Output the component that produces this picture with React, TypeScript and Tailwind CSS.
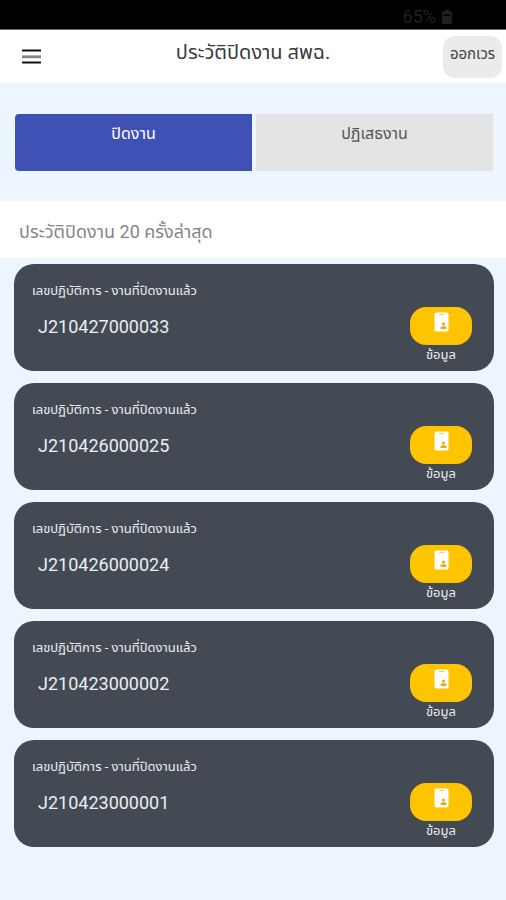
import { useState } from "react";

const jobs = [
  "J210427000033",
  "J210426000025",
  "J210426000024",
  "J210423000002",
  "J210423000001",
];

function StatusBar() {
  return (
    <div className="flex h-[30px] items-center justify-end gap-1.5 border-b border-[#6b6566] bg-black pr-[54px] pt-1 text-[#231f20]">
      <span className="text-lg leading-5">65%</span>
      <svg viewBox="0 0 10 14" className="h-3.5 w-2.5" fill="currentColor" aria-hidden="true">
        <path d="M3 0h4v1.500h2a1 1 0 0 1 1 1V13a1 1 0 0 1-1 1H1a1 1 0 0 1-1-1V2.500a1 1 0 0 1 1-1h2z" />
        <path d="M2 4h6v2H2z" fill="#000" />
      </svg>
    </div>
  );
}

function Header() {
  return (
    <header className="grid h-[53px] grid-cols-[1fr_auto_1fr] bg-white">
      <button type="button" aria-label="เมนู" className="mt-4 ml-5 h-6 w-6 justify-self-start">
        <svg viewBox="0 0 24 24" className="h-6 w-6" aria-hidden="true">
          <path d="M2 4.500h19M2 16.500h19" stroke="#111" strokeWidth="2.200" />
          <path d="M2 10.800h19" stroke="#858585" strokeWidth="2.800" />
        </svg>
      </button>
      <h1 className="pt-2 text-xl leading-7 text-[#3a3a3a]">ประวัติปิดงาน สพฉ.</h1>
      <button
        type="button"
        className="mt-1.5 mr-1 flex h-[42px] w-[59px] justify-center justify-self-end rounded-xl bg-[#ebebeb] pt-1.5 text-[15px] leading-6 whitespace-nowrap text-[#444]"
      >
        ออกเวร
      </button>
    </header>
  );
}

function BadgeIcon() {
  return (
    <svg viewBox="0 0 15 20" className="h-5 w-[15px]" aria-hidden="true">
      <rect x="0.500" y="0.500" width="14" height="19" rx="2" fill="#fff" />
      <path d="M5.500 2.500h4" stroke="#f6cf55" strokeWidth="1.200" strokeLinecap="round" />
      <circle cx="9.500" cy="12" r="1.600" fill="#e5ad14" />
      <path d="M6.500 17v-1c0-1.300 1.300-2 3-2s3 .7 3 2v1z" fill="#e5ad14" />
    </svg>
  );
}

function JobCard({ id }: { id: string }) {
  return (
    <li className="flex h-[107px] justify-between rounded-[20px] bg-[#434a54] pr-[22px] pl-[18px] text-[#eceef1]">
      <div className="pt-[17px]">
        <p className="text-[13px] leading-5">เลขปฏิบัติการ - งานที่ปิดงานแล้ว</p>
        <p className="mt-3.5 pl-1.5 text-lg leading-6">{id}</p>
      </div>
      <button type="button" className="flex flex-col items-center self-start pt-[43px] text-[13px] leading-5">
        <span className="flex h-[38px] w-[62px] justify-center rounded-2xl bg-[#fec400] pt-[5px]">
          <BadgeIcon />
        </span>
        ข้อมูล
      </button>
    </li>
  );
}

export default function App() {
  const [tab, setTab] = useState<"closed" | "rejected">("closed");

  const tabClass = (active: boolean) =>
    active
      ? "flex h-[57px] flex-1 justify-center bg-[#3f51b5] pt-2 text-base leading-6 text-white"
      : "flex h-[57px] flex-1 justify-center bg-[#e4e4e4] pt-2 text-base leading-6 text-[#555]";

  return (
    <div className="min-h-screen bg-[#edf6ff] font-['Roboto','Noto_Sans_Thai','Noto_Sans',sans-serif]">
      <StatusBar />
      <Header />

      <div className="flex gap-1 pt-[31px] pr-[13px] pb-[30px] pl-[15px]">
        <div className="flex flex-1 overflow-hidden rounded-l">
          <button type="button" aria-pressed={tab === "closed"} onClick={() => setTab("closed")} className={tabClass(tab === "closed")}>
            ปิดงาน
          </button>
        </div>
        <div className="flex flex-1 overflow-hidden">
          <button type="button" aria-pressed={tab === "rejected"} onClick={() => setTab("rejected")} className={tabClass(tab === "rejected")}>
            ปฏิเสธงาน
          </button>
        </div>
      </div>

      <h2 className="bg-white px-[19px] pt-[17px] pb-3 text-lg leading-7 text-[#858585]">
        ประวัติปิดงาน 20 ครั้งล่าสุด
      </h2>

      <ul className="flex flex-col gap-3 pt-1.5 pr-3 pb-5 pl-3.5">
        {jobs.map((id) => (
          <JobCard key={id} id={id} />
        ))}
      </ul>
    </div>
  );
}
